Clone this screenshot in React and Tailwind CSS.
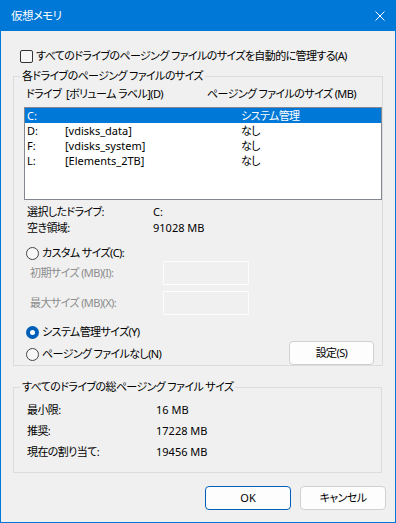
import React from 'react'

const drives = [
  { d: 'C:', label: '', size: 'システム管理', selected: true },
  { d: 'D:', label: '[vdisks_data]', size: 'なし' },
  { d: 'F:', label: '[vdisks_system]', size: 'なし' },
  { d: 'L:', label: '[Elements_2TB]', size: 'なし' },
]

function Radio({ checked }) {
  if (checked) {
    return <span className="w-[13px] h-[13px] rounded-full bg-[#005fb8] flex items-center justify-center shrink-0">
      <span className="w-[5px] h-[5px] rounded-full bg-white" />
    </span>
  }
  return <span className="w-[13px] h-[13px] rounded-full border border-[#444] bg-[#f7f7f7] shrink-0" />
}

function Btn({ children, primary, className = '' }) {
  return <button className={(primary ? 'border-[#005fb8] ' : 'border-[#d0d0d0] ') + 'h-[24px] border rounded-[4px] bg-[#fdfdfd] text-center leading-[22px] ' + className}>{children}</button>
}

export default function App() {
  return <div className="w-[396px] h-[523px] flex flex-col whitespace-nowrap font-['Noto_Sans','Noto_Sans_CJK_JP',sans-serif] text-[11px] tracking-[-0.6px] leading-[16px] text-black [font-feature-settings:'palt']">
    <div className="h-[31px] shrink-0 bg-[#0078d7] flex items-center justify-between pl-[11px] pr-[11px] text-white text-[11.5px]">
      <span>仮想メモリ</span>
      <svg width="10" height="10" viewBox="0 0 10 10" className="block"><path d="M0.5 0.5L9.5 9.5M9.5 0.5L0.5 9.5" stroke="white" strokeWidth="1" fill="none" /></svg>
    </div>

    <div className="flex-1 bg-[#f0f0f0] border-x border-b border-[#0078d7] pl-[12px] pr-[9px] pt-[17px]">
      <label className="flex items-center h-[16px] pl-[7px] gap-[3px]">
        <span className="w-[13px] h-[13px] border border-[#333] rounded-[2px] bg-[#f7f7f7] shrink-0" />
        <span>すべてのドライブのページング ファイルのサイズを自動的に管理する(A)</span>
      </label>

      <fieldset className="mt-[4px] w-[369px] border border-[#dcdcdc] p-0">
        <legend className="ml-[6px] px-[2px] leading-[16px]">各ドライブのページング ファイルのサイズ</legend>
        <div className="pl-[10px]">
          <div className="flex mt-[2px] pl-[2px]">
            <span className="w-[40px]">ドライブ</span>
            <span className="w-[141px]">[ボリューム ラベル](D)</span>
            <span>ページング ファイルのサイズ (MB)</span>
          </div>
          <div className="mt-[5px] w-[358px] h-[93px] border border-[#828790] bg-white">
            {drives.map((r) => <div key={r.d} className={(r.selected ? 'bg-[#0078d7] text-white ' : '') + 'flex h-[15px] leading-[15px]'}>
              <span className="w-[40px] pl-[2px] tracking-normal">{r.d}</span>
              <span className="w-[176px] tracking-normal">{r.label}</span>
              <span>{r.size}</span>
            </div>)}
          </div>

          <div className="mt-[4px] pl-[3px]">
            <div className="flex"><span className="w-[126px]">選択したドライブ:</span><span className="tracking-normal">C:</span></div>
            <div className="flex"><span className="w-[126px]">空き領域:</span><span className="tracking-normal">91028 MB</span></div>
          </div>

          <label className="mt-[9px] flex items-center gap-[3px] pl-[2px]">
            <Radio />
            <span>カスタム サイズ(C):</span>
          </label>
          <div className="flex items-center h-[24px] pl-[6px] text-[#8d8d8d]">
            <span className="w-[133px]">初期サイズ (MB)(I):</span>
            <span className="w-[86px] h-[24px] border border-[#fcfcfc]" />
          </div>
          <div className="mt-[6px] flex items-center h-[24px] pl-[6px] text-[#8d8d8d]">
            <span className="w-[133px]">最大サイズ (MB)(X):</span>
            <span className="w-[86px] h-[24px] border border-[#fcfcfc]" />
          </div>

          <label className="mt-[9px] flex items-center gap-[3px] pl-[2px]">
            <Radio checked />
            <span>システム管理サイズ(Y)</span>
          </label>
          <div className="mt-[1px] flex items-center pr-[8px]">
            <label className="flex items-center gap-[3px] pl-[2px] mt-[2px]">
              <Radio />
              <span>ページング ファイルなし(N)</span>
            </label>
            <Btn className="ml-auto w-[85px]">設定(S)</Btn>
          </div>
        </div>
      </fieldset>

      <fieldset className="mt-[13px] w-[369px] border border-[#dcdcdc] p-0">
        <legend className="ml-[6px] px-[2px] leading-[16px]">すべてのドライブの総ページング ファイル サイズ</legend>
        <div className="pl-[13px] mt-[4px] pb-[10px] leading-[21px]">
          <div className="flex"><span className="w-[129px]">最小限:</span><span className="tracking-normal">16 MB</span></div>
          <div className="flex"><span className="w-[129px]">推奨:</span><span className="tracking-normal">17228 MB</span></div>
          <div className="flex"><span className="w-[129px]">現在の割り当て:</span><span className="tracking-normal">19456 MB</span></div>
        </div>
      </fieldset>

      <div className="mt-[13px] flex justify-end gap-[9px]">
        <Btn primary className="w-[86px] tracking-normal">OK</Btn>
        <Btn className="w-[86px]">キャンセル</Btn>
      </div>
    </div>
  </div>
}
